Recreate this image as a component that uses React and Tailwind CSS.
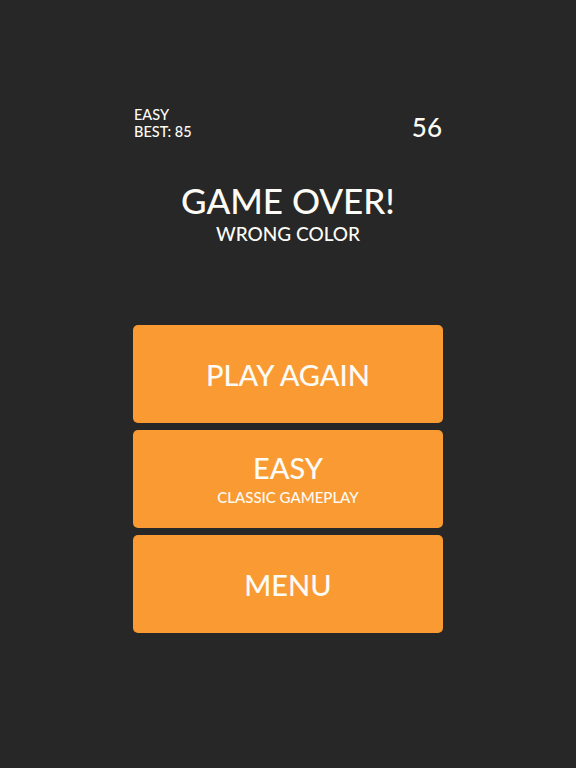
export default function App() {
  const buttons = [
    { id: 'again', label: 'PLAY AGAIN' },
    { id: 'mode', label: 'EASY', sub: 'CLASSIC GAMEPLAY' },
    { id: 'menu', label: 'MENU' },
  ];

  return (
    <main className="h-screen w-full bg-[#272727] text-[#fdfbf5]" style={{ fontFamily: 'Lato, "Open Sans", sans-serif' }}>
      <div className="mx-auto w-[310px] pt-[106px]">
        {/* score header */}
        <div className="flex items-start justify-between pl-[1px] pr-[1px]">
          <div className="text-[14.5px] leading-[17px] font-medium">
            <div>EASY</div>
            <div>BEST: 85</div>
          </div>
          <div className="text-[26px] leading-none font-medium mt-[8px]">56</div>
        </div>

        <div className="mt-[43px] flex flex-col items-center">
          <h1 className="text-[35px] leading-none font-medium">GAME OVER!</h1>
          <p className="mt-[6px] text-[19px] leading-none font-medium">WRONG COLOR</p>
        </div>

        <div className="mt-[82px] flex flex-col gap-[7px]">
          {buttons.map(b => (
            <button
              key={b.id}
              className="h-[98px] w-full rounded-[5px] bg-[#fa9a32] flex flex-col items-center justify-center"
            >
              <span className="text-[29px] leading-none font-medium">{b.label}</span>
              {b.sub && <span className="mt-[8px] text-[15px] leading-none font-medium">{b.sub}</span>}
            </button>
          ))}
        </div>
      </div>
    </main>
  );
}
